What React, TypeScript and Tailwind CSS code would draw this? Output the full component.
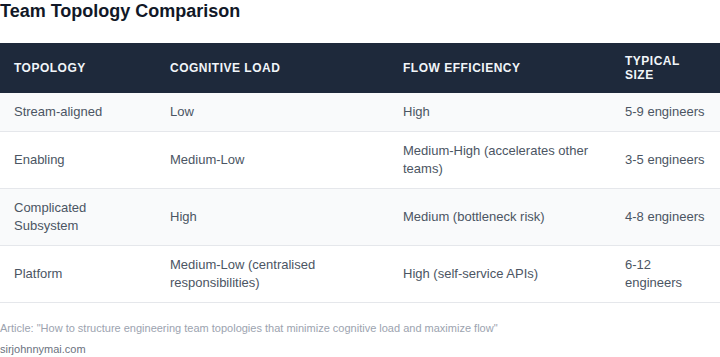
import React from "react";

const rows = [
  ["Stream-aligned", "Low", "High", "5-9 engineers"],
  ["Enabling", "Medium-Low", "Medium-High (accelerates other teams)", "3-5 engineers"],
  ["Complicated Subsystem", "High", "Medium (bottleneck risk)", "4-8 engineers"],
  ["Platform", "Medium-Low (centralised responsibilities)", "High (self-service APIs)", "6-12 engineers"],
];

export default function App() {
  return (
    <div className="w-[720px] bg-white" style={{ fontFamily: '"Liberation Sans", Arial, sans-serif' }}>
      <h1 className="text-[18px] leading-[22px] font-bold text-[#111827]">Team Topology Comparison</h1>
      <table className="mt-[21px] w-[720px] table-fixed border-separate border-spacing-0">
        <colgroup>
          <col className="w-[156px]" />
          <col className="w-[233px]" />
          <col className="w-[222px]" />
          <col className="w-[109px]" />
        </colgroup>
        <thead>
          <tr className="bg-[#1e293b]">
            {["Topology", "Cognitive Load", "Flow Efficiency", "Typical Size"].map((h) => (
              <th
                key={h}
                className="px-[14px] py-[11px] h-[50px] text-left text-[12px] leading-[14px] font-bold uppercase tracking-[0.5px] text-[#f1f5f9]"
              >
                {h}
              </th>
            ))}
          </tr>
        </thead>
        <tbody>
          {rows.map((r, i) => (
            <tr key={i} className={i % 2 === 0 ? "bg-[#f9fafb]" : "bg-white"}>
              {r.map((c, j) => (
                <td
                  key={j}
                  className="px-[14px] py-[10px] border-b border-[#e5e7eb] text-[13px] leading-[18px] text-[#4b5563] align-middle"
                >
                  {c}
                </td>
              ))}
            </tr>
          ))}
        </tbody>
      </table>
      <div className="mt-[17px] text-[11px] leading-[16px] text-[#9ca3af]">
        Article: "How to structure engineering team topologies that minimize cognitive load and maximize flow"
      </div>
      <div className="mt-[5px] text-[11px] leading-[16px] text-[#6b7280]">sirjohnnymai.com</div>
    </div>
  );
}
